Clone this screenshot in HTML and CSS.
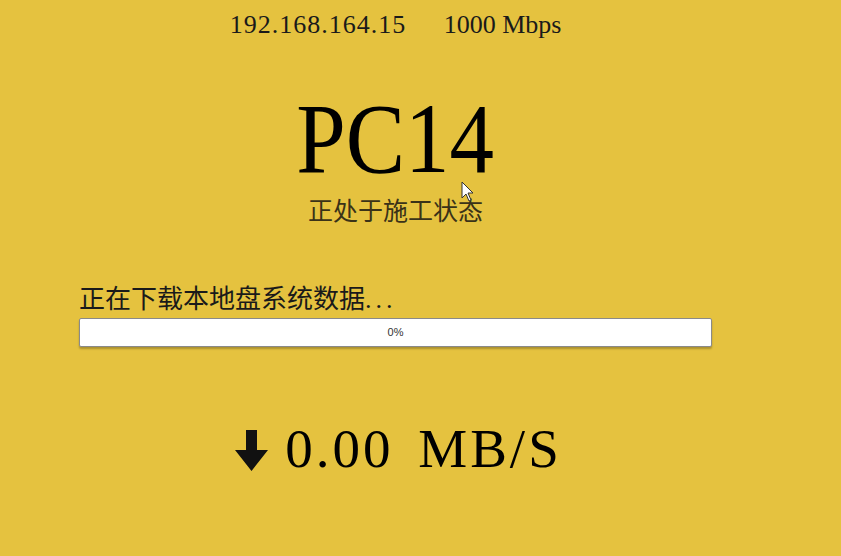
FILE: index.html
```html
<!DOCTYPE html>
<html lang="zh-CN">
<head>
    <meta charset="UTF-8">
    <meta name="viewport" content="width=device-width, initial-scale=1.0">
    <title>PC14</title>
    <link rel="stylesheet" href="styles.css">
</head>
<body>
    <div class="screen">
        <div class="netinfo">
            <span class="ip">192.168.164.15</span>
            <span class="speed-link">1000 Mbps</span>
        </div>
        <div class="pc-name"><span>PC14</span></div>
        <div class="status">正处于施工状态</div>

        <div class="task">
            <div class="task-label">正在下载本地盘系统数据<span class="dots">...</span></div>
            <div class="progress">
                <div class="progress-fill" style="width: 0%"></div>
                <span class="progress-text">0%</span>
            </div>
        </div>

        <div class="rate">
            <svg class="rate-arrow" width="34" height="42" viewBox="0 0 34 42">
                <path d="M11 0 H22 V20 H33 L16.5 41 L0 20 H11 Z" fill="#111"/>
            </svg>
            <span class="rate-value">0.00 MB/S</span>
        </div>

        <svg class="cursor" width="14" height="22" viewBox="0 0 14 22">
            <path d="M1 1 V17 L5 13 L8 20 L10 19 L7 12 H12 Z" fill="#fff" stroke="#333" stroke-width="1"/>
        </svg>
    </div>
</body>
</html>
```

FILE: styles.css
```css
body {
    margin: 0;
    padding: 0;
    background: #E5C23F;
    font-family: "Liberation Serif", "Noto Sans CJK SC", serif;
    color: #111;
}
.screen {
    position: relative;
    width: 791px;
    height: 556px;
    text-align: center;
}
.netinfo {
    padding-top: 10px;
    font-size: 26px;
    line-height: 30px;
    letter-spacing: 1px;
    color: #1a1a1a;
}
.netinfo .ip {
    margin-right: 30px;
}
.netinfo .speed-link {
    letter-spacing: 0;
}
.pc-name {
    margin-top: 47px;
    font-size: 100px;
    line-height: 104px;
    color: #000;
}
.pc-name span {
    display: inline-block;
    transform: scaleX(0.89);
}
.status {
    margin-top: 6px;
    font-size: 25px;
    line-height: 30px;
    color: #3a3218;
}
.task {
    margin: 58px 0 0 79px;
    width: 633px;
    text-align: left;
}
.task-label {
    font-size: 26px;
    line-height: 30px;
    color: #1a1a1a;
}
.task-label .dots {
    letter-spacing: 4px;
}
.progress {
    position: relative;
    margin-top: 3px;
    height: 27px;
    background: #fff;
    border: 1px solid #8a8a8a;
    border-radius: 2px;
    box-shadow: 0 2px 2px rgba(0, 0, 0, 0.25);
    text-align: center;
}
.progress-fill {
    height: 100%;
    background: #4a90d9;
}
.progress-text {
    position: absolute;
    left: 0;
    right: 0;
    top: 7px;
    font-family: "Liberation Sans", sans-serif;
    font-size: 11px;
    color: #333;
}
.rate {
    margin-top: 72px;
    display: flex;
    justify-content: center;
    align-items: center;
    gap: 16px;
}
.rate-arrow {
    margin-top: 4px;
    margin-left: 6px;
}
.rate-value {
    font-size: 55px;
    line-height: 60px;
    letter-spacing: 3px;
    word-spacing: 8px;
    color: #000;
}
.cursor {
    position: absolute;
    left: 461px;
    top: 181px;
}
```
